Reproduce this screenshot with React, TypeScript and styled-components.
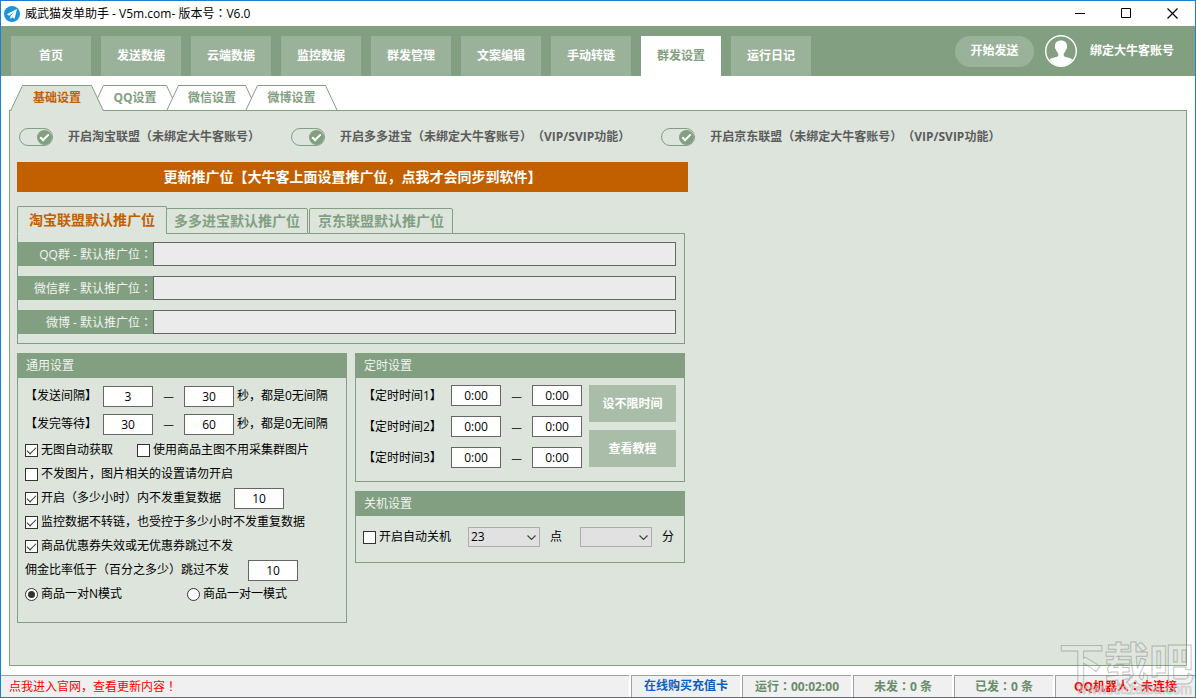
import React from "react";
import styled, { createGlobalStyle } from "styled-components";

const green = "#82a081";
const greenLight = "#9ab29a";
const pale = "#dde4dc";
const orange = "#c26000";

const GlobalStyle = createGlobalStyle`
  *, *::before, *::after { box-sizing: border-box; }
  body { margin: 0; background: #fff; text-spacing-trim: space-all; }
  body, button, input, select {
    font-family: "Open Sans", "Noto Sans CJK SC", sans-serif;
    font-size: 12px;
    line-height: 18px;
    color: #000;
  }
  button { border: 0; padding: 0; background: none; cursor: pointer; white-space: nowrap; }
`;

const Window = styled.div`
  position: relative;
  display: flex;
  flex-direction: column;
  min-height: 100vh;
  border: 1px solid #1a80d4;
  background: #fff;
`;

const TitleBar = styled.header`
  display: flex;
  align-items: center;
  height: 25px;
  padding-left: 3px;
`;

const Title = styled.h1`
  flex: 1;
  margin: 0 0 0 5px;
  font-size: 12px;
  line-height: 18px;
  font-weight: 400;
`;

const WindowButton = styled.button`
  display: flex;
  align-items: center;
  justify-content: center;
  width: 46px;
  height: 25px;
`;

const Header = styled.div`
  display: flex;
  justify-content: space-between;
  align-items: flex-start;
  min-height: 50px;
  padding: 0 21px 0 10px;
  background: ${green};
`;

const MainNav = styled.nav`
  display: flex;
  gap: 10px;
  padding-top: 10px;
`;

const MainTab = styled.button<{ $active?: boolean }>`
  width: 80px;
  height: 40px;
  font-weight: 700;
  background: ${(p) => (p.$active ? "#fff" : greenLight)};
  color: ${(p) => (p.$active ? green : "#fff")};
`;

const Account = styled.div`
  display: flex;
  align-items: center;
  gap: 11px;
  padding-top: 9px;
`;

const StartButton = styled.button`
  width: 79px;
  height: 31px;
  border-radius: 16px;
  font-weight: 700;
  color: #fff;
  background: ${greenLight};
`;

const AccountLink = styled.a`
  margin-left: 2px;
  font-weight: 700;
  color: #fff;
  text-decoration: none;
`;

const SubTabs = styled.nav`
  display: flex;
  position: relative;
  z-index: 1;
  margin: 9px 0 -1px 9px;
`;

const SubTabButton = styled.button<{ $active?: boolean; $level: number }>`
  position: relative;
  z-index: ${(p) => p.$level};
  height: 26px;
  font-weight: 700;
  color: ${(p) => (p.$active ? orange : green)};
  & + & { margin-left: -13px; }
  svg { position: absolute; left: 0; top: 0; }
  span { position: relative; }
`;

const TabText = styled.span<{ $width: number }>`
  display: block;
  width: ${(p) => p.$width}px;
  text-align: center;
`;

const Panel = styled.main`
  flex: 1;
  margin: 0 8px 9px;
  padding: 17px 7px;
  border: 1px solid ${green};
  background: ${pale};
`;

const ToggleRow = styled.div`
  display: flex;
  flex-wrap: wrap;
  gap: 8px 31px;
  margin-bottom: 16px;
  padding-left: 2px;
`;

const ToggleLabel = styled.label`
  display: flex;
  align-items: center;
  gap: 15px;
  font-weight: 700;
  color: #5c5c5c;
`;

const Switch = styled.input`
  appearance: none;
  position: relative;
  width: 34px;
  height: 18px;
  margin: 0;
  border: 1px solid ${green};
  border-radius: 9px;
  &::before {
    content: "";
    position: absolute;
    top: 1px;
    right: 0;
    width: 15px;
    height: 15px;
    border-radius: 50%;
    background: ${green};
  }
  &::after {
    content: "";
    position: absolute;
    top: 5px;
    right: 3px;
    width: 9px;
    height: 5px;
    border: solid #fff;
    border-width: 0 0 2px 2px;
    transform: rotate(-45deg);
  }
`;

const Column = styled.div`
  max-width: 671px;
`;

const UpdateButton = styled.button`
  display: block;
  width: 100%;
  height: 30px;
  margin-bottom: 14px;
  font-size: 14px;
  font-weight: 700;
  color: #fff;
  background: ${orange};
`;

const Settings = styled.div`
  display: flex;
  flex-direction: column;
  margin-right: 3px;
`;

const UnionTabs = styled.div`
  display: flex;
  align-items: flex-end;
  position: relative;
  z-index: 1;
  margin-bottom: -1px;
`;

const UnionTab = styled.button<{ $active?: boolean }>`
  width: ${(p) => (p.$active ? 150 : 142)}px;
  height: ${(p) => (p.$active ? 28 : 26)}px;
  border: 1px solid ${green};
  border-bottom-color: ${(p) => (p.$active ? pale : green)};
  border-radius: 2px 2px 0 0;
  background: ${pale};
  color: ${(p) => (p.$active ? orange : green)};
  font-size: 14px;
  font-weight: 700;
  &:nth-child(2) { margin-left: -1px; }
  &:nth-child(3) { margin-left: 1px; width: 144px; }
`;

const UnionBox = styled.div`
  display: flex;
  flex-direction: column;
  gap: 10px;
  margin-bottom: 9px;
  padding: 8px 8px 9px 0;
  border: 1px solid ${green};
`;

const Slot = styled.div`
  display: flex;
  height: 24px;
  label {
    width: 135px;
    padding-right: 1px;
    line-height: 24px;
    text-align: right;
    white-space: nowrap;
    color: #f0f4f0;
    background: ${green};
  }
  input {
    flex: 1;
    min-width: 0;
    padding: 0 4px;
    border: 1px solid #666;
    background: #ebebeb;
  }
`;

const Groups = styled.div`
  display: grid;
  grid-template-columns: 1fr 1fr;
  gap: 8px;
  align-items: start;
`;

const Stack = styled.div`
  display: grid;
  gap: 9px;
`;

const Group = styled.section`
  border: 1px solid ${green};
`;

const GroupTitle = styled.h2`
  margin: 0;
  height: 24px;
  padding-left: 8px;
  font-size: 12px;
  line-height: 24px;
  font-weight: 400;
  color: #f0f4f0;
  background: ${green};
`;

const GeneralBody = styled.div`
  padding: 4px 7px 16px;
`;

const Row = styled.div<{ $height: number }>`
  display: flex;
  align-items: center;
  height: ${(p) => p.$height}px;
  white-space: nowrap;
`;

const RangeLabel = styled.span<{ $width: number }>`
  width: ${(p) => p.$width}px;
`;

const Dash = styled.span`
  width: 31px;
  font-family: "Noto Sans CJK SC", sans-serif;
  text-align: center;
`;

const NumberBox = styled.input`
  width: 50px;
  height: 21px;
  padding: 0;
  border: 1px solid #666;
  background: #fff;
  text-align: center;
`;

const Unit = styled.span`
  margin-left: 3px;
`;

const Check = styled.label<{ $width?: number }>`
  display: flex;
  align-items: center;
  gap: 3px;
  width: ${(p) => (p.$width ? p.$width + "px" : "auto")};
`;

const Tick = styled.input`
  appearance: none;
  position: relative;
  flex: none;
  width: 13px;
  height: 13px;
  margin: 0;
  border: 1px solid #333;
  background: #fff;
  &[type="radio"] { border-radius: 50%; }
  &[type="checkbox"]:checked::after {
    content: "";
    position: absolute;
    left: 1px;
    top: 2px;
    width: 9px;
    height: 5px;
    border: solid #333;
    border-width: 0 0 1px 1px;
    transform: rotate(-45deg);
  }
  &[type="radio"]:checked::after {
    content: "";
    position: absolute;
    inset: 2px;
    border-radius: 50%;
    background: #333;
  }
`;

const InlineField = styled.label<{ $width: number }>`
  width: ${(p) => p.$width}px;
`;

const TimerBody = styled.div`
  display: flex;
  justify-content: space-between;
  padding: 2px 8px 8px 7px;
`;

const TimerActions = styled.div`
  display: flex;
  flex-direction: column;
  gap: 8px;
  padding-top: 5px;
`;

const ActionButton = styled.button`
  width: 87px;
  height: 37px;
  font-weight: 700;
  color: #fff;
  background: #a9bda9;
`;

const ShutdownBody = styled.div`
  padding: 7px 7px 11px;
`;

const SelectWrap = styled.span`
  display: flex;
  position: relative;
  svg { position: absolute; right: 3px; top: 7px; pointer-events: none; }
`;

const Select = styled.select`
  appearance: none;
  width: 72px;
  height: 20px;
  padding: 0 2px;
  border: 1px solid #adadad;
  border-radius: 0;
  background: #e1e1e1;
`;

const SelectUnit = styled.span<{ $last?: boolean }>`
  width: ${(p) => (p.$last ? "auto" : "40px")};
  padding-left: 10px;
`;

const StatusBar = styled.footer`
  display: flex;
  gap: 2px;
  height: 22px;
`;

const StatusCell = styled.div<{ $width?: number; $color: string }>`
  flex: ${(p) => (p.$width ? `0 0 ${p.$width}px` : "1")};
  border-top: 1px solid #a0a0a0;
  border-left: ${(p) => (p.$width ? "1px solid #a0a0a0" : "0")};
  padding-left: ${(p) => (p.$width ? 0 : 8)}px;
  background: #f0f0f0;
  line-height: 20px;
  text-align: ${(p) => (p.$width ? "center" : "left")};
  font-weight: ${(p) => (p.$width ? 700 : 400)};
  color: ${(p) => p.$color};
  white-space: nowrap;
  a { color: inherit; text-decoration: none; }
`;

const CentredMark = styled.span`
  font-family: "Noto Sans CJK JP", sans-serif;
`;

const Watermark = styled.div`
  position: absolute;
  right: 0;
  bottom: 0;
  width: 136px;
  height: 60px;
  pointer-events: none;
`;

const WatermarkName = styled.div`
  font-size: 45px;
  line-height: 54px;
  font-weight: 700;
  white-space: nowrap;
  color: rgba(255, 255, 255, 0.15);
  -webkit-text-stroke: 1px rgba(110, 120, 110, 0.45);
`;

const WatermarkSite = styled.div`
  position: absolute;
  right: 3px;
  bottom: 0;
  font-family: "Liberation Sans", sans-serif;
  font-size: 14px;
  line-height: 16px;
  color: rgba(255, 255, 255, 0.6);
  -webkit-text-stroke: 1px rgba(120, 120, 120, 0.3);
`;

const AppIcon = () => (
  <svg width="16" height="16" viewBox="0 0 16 16" aria-hidden="true">
    <circle cx="8" cy="8" r="8" fill="#1c95d8" />
    <path d="M13 3 2.8 8.3l2.5 1.5L11 5.200 6.400 10.300v2.900l1.700-2 2.500 1.500z" fill="#fff" />
  </svg>
);

const Avatar = () => (
  <svg width="32" height="32" viewBox="0 0 32 32" aria-hidden="true">
    <circle cx="16" cy="16" r="15.300" fill="none" stroke="#fff" strokeWidth="1.400" />
    <path
      d="M16 5.500c-4 0-6.200 2.300-6 5.800-.5 1 .1 2.700 1 3.200.5 2 1.300 3 2.300 3.900v2.500c-1.200 1.400-6.300 1.500-8.800 3.400C7 28.500 11.500 31 16 31s9-2.500 11.500-6.700c-2.500-1.900-7.600-2-8.800-3.400v-2.500c1-.9 1.800-1.900 2.300-3.900.9-.5 1.500-2.200 1-3.200.2-3.500-2-5.800-6-5.800z"
      fill="#fff"
    />
  </svg>
);

const Chevron = () => (
  <svg width="11" height="7" viewBox="0 0 11 7" aria-hidden="true">
    <path d="M1.500 1.500 5.500 5.500 9.500 1.500" fill="none" stroke="#444" strokeWidth="1.200" />
  </svg>
);

const TabShape = ({ width, active }: { width: number; active?: boolean }) => (
  <svg width={width} height="26" viewBox={`0 0 ${width} 26`} aria-hidden="true">
    <path
      d={`M0.500 26 L12.500 0.500 H${width - 12.5} L${width - 0.5} 26`}
      fill={active ? pale : "#fff"}
      stroke={green}
    />
    {!active && <path d={`M0 25.500 H${width}`} stroke={green} />}
  </svg>
);

/* Sets full-width colons and exclamation marks in the middle of their cell. */
const Text = ({ children }: { children: string }) => (
  <span>
    {children.split(/([：！])/).map((part, i) =>
      i % 2 ? <CentredMark key={i}>{part}</CentredMark> : part
    )}
  </span>
);

const mainTabs = ["首页", "发送数据", "云端数据", "监控数据", "群发管理", "文案编辑", "手动转链", "群发设置", "运行日记"];

const subTabs = [
  { name: "基础设置", width: 94, level: 5, active: true },
  { name: "QQ设置", width: 88, level: 1 },
  { name: "微信设置", width: 92, level: 2 },
  { name: "微博设置", width: 93, level: 3 },
];

const switches = [
  "开启淘宝联盟（未绑定大牛客账号）",
  "开启多多进宝（未绑定大牛客账号）（VIP/SVIP功能）",
  "开启京东联盟（未绑定大牛客账号）（VIP/SVIP功能）",
];

const unions = ["淘宝联盟默认推广位", "多多进宝默认推广位", "京东联盟默认推广位"];
const slots = ["QQ群 - 默认推广位：", "微信群 - 默认推广位：", "微博 - 默认推广位："];

const ranges = [
  { name: "【发送间隔】", from: "3", to: "30" },
  { name: "【发完等待】", from: "30", to: "60" },
];

const SubTab = ({ name, width, level, active }: { name: string; width: number; level: number; active?: boolean }) => (
  <SubTabButton $active={active} $level={level}>
    <TabShape width={width} active={active} />
    <TabText $width={width}>{name}</TabText>
  </SubTabButton>
);

export default function App() {
  return (
    <Window>
      <GlobalStyle />
      <TitleBar>
        <AppIcon />
        <Title><Text>威武猫发单助手 - V5m.com- 版本号：V6.0</Text></Title>
        <WindowButton aria-label="最小化">
          <svg width="11" height="11"><path d="M0 5.500h10" stroke="#000" /></svg>
        </WindowButton>
        <WindowButton aria-label="最大化">
          <svg width="11" height="11"><path d="M.5.5h9v9h-9z" fill="none" stroke="#000" /></svg>
        </WindowButton>
        <WindowButton aria-label="关闭">
          <svg width="11" height="11"><path d="M.5.5l10 10M10.500.5l-10 10" stroke="#000" strokeWidth="1.200" /></svg>
        </WindowButton>
      </TitleBar>

      <Header>
        <MainNav>
          {mainTabs.map((name) => (
            <MainTab key={name} $active={name === "群发设置"}>{name}</MainTab>
          ))}
        </MainNav>
        <Account>
          <StartButton>开始发送</StartButton>
          <Avatar />
          <AccountLink href="#account">绑定大牛客账号</AccountLink>
        </Account>
      </Header>

      <SubTabs>
        {subTabs.map((tab) => (
          <SubTab key={tab.name} {...tab} />
        ))}
      </SubTabs>

      <Panel>
        <ToggleRow>
          {switches.map((name) => (
            <ToggleLabel key={name}>
              <Switch type="checkbox" role="switch" defaultChecked />
              {name}
            </ToggleLabel>
          ))}
        </ToggleRow>

        <Column>
          <UpdateButton>更新推广位【大牛客上面设置推广位，点我才会同步到软件】</UpdateButton>
          <Settings>
            <UnionTabs>
              {unions.map((name, i) => (
                <UnionTab key={name} $active={i === 0}>{name}</UnionTab>
              ))}
            </UnionTabs>
            <UnionBox>
              {slots.map((name, i) => (
                <Slot key={name}>
                  <label htmlFor={`slot${i}`}><Text>{name}</Text></label>
                  <input id={`slot${i}`} type="text" readOnly />
                </Slot>
              ))}
            </UnionBox>

            <Groups>
              <Group>
                <GroupTitle>通用设置</GroupTitle>
                <GeneralBody>
                  {ranges.map((r) => (
                    <Row key={r.name} $height={28}>
                      <RangeLabel $width={78}>{r.name}</RangeLabel>
                      <NumberBox aria-label={r.name} defaultValue={r.from} />
                      <Dash>—</Dash>
                      <NumberBox aria-label={r.name} defaultValue={r.to} />
                      <Unit>秒，都是0无间隔</Unit>
                    </Row>
                  ))}
                  <Row $height={24}>
                    <Check $width={112}><Tick type="checkbox" defaultChecked />无图自动获取</Check>
                    <Check><Tick type="checkbox" />使用商品主图不用采集群图片</Check>
                  </Row>
                  <Row $height={24}>
                    <Check><Tick type="checkbox" />不发图片，图片相关的设置请勿开启</Check>
                  </Row>
                  <Row $height={24}>
                    <Check $width={209}><Tick type="checkbox" defaultChecked />开启（多少小时）内不发重复数据</Check>
                    <NumberBox aria-label="小时" defaultValue="10" />
                  </Row>
                  <Row $height={24}>
                    <Check><Tick type="checkbox" defaultChecked />监控数据不转链，也受控于多少小时不发重复数据</Check>
                  </Row>
                  <Row $height={24}>
                    <Check><Tick type="checkbox" defaultChecked />商品优惠券失效或无优惠券跳过不发</Check>
                  </Row>
                  <Row $height={24}>
                    <InlineField $width={223} htmlFor="commission">佣金比率低于（百分之多少）跳过不发</InlineField>
                    <NumberBox id="commission" defaultValue="10" />
                  </Row>
                  <Row $height={24}>
                    <Check $width={162}><Tick type="radio" name="mode" defaultChecked />商品一对N模式</Check>
                    <Check><Tick type="radio" name="mode" />商品一对一模式</Check>
                  </Row>
                </GeneralBody>
              </Group>

              <Stack>
                <Group>
                  <GroupTitle>定时设置</GroupTitle>
                  <TimerBody>
                    <div>
                      {["【定时时间1】", "【定时时间2】", "【定时时间3】"].map((name) => (
                        <Row key={name} $height={31}>
                          <RangeLabel $width={88}>{name}</RangeLabel>
                          <NumberBox aria-label={name} defaultValue="0:00" />
                          <Dash>—</Dash>
                          <NumberBox aria-label={name} defaultValue="0:00" />
                        </Row>
                      ))}
                    </div>
                    <TimerActions>
                      <ActionButton>设不限时间</ActionButton>
                      <ActionButton>查看教程</ActionButton>
                    </TimerActions>
                  </TimerBody>
                </Group>

                <Group>
                  <GroupTitle>关机设置</GroupTitle>
                  <ShutdownBody>
                    <Row $height={28}>
                      <Check $width={105}><Tick type="checkbox" />开启自动关机</Check>
                      <SelectWrap>
                        <Select aria-label="点" defaultValue="23"><option>23</option></Select>
                        <Chevron />
                      </SelectWrap>
                      <SelectUnit>点</SelectUnit>
                      <SelectWrap>
                        <Select aria-label="分" defaultValue=""><option value=""></option></Select>
                        <Chevron />
                      </SelectWrap>
                      <SelectUnit $last>分</SelectUnit>
                    </Row>
                  </ShutdownBody>
                </Group>
              </Stack>
            </Groups>
          </Settings>
        </Column>
      </Panel>

      <StatusBar>
        <StatusCell $color="#f00"><a href="#site"><Text>点我进入官网，查看更新内容！</Text></a></StatusCell>
        <StatusCell $width={109} $color="#0a5fc4"><a href="#buy">在线购买充值卡</a></StatusCell>
        <StatusCell $width={109} $color="#6a8c6a"><Text>运行：00:02:00</Text></StatusCell>
        <StatusCell $width={99} $color="#6a8c6a"><Text>未发：0 条</Text></StatusCell>
        <StatusCell $width={99} $color="#6a8c6a"><Text>已发：0 条</Text></StatusCell>
        <StatusCell $width={140} $color="#f00"><Text>QQ机器人：未连接</Text></StatusCell>
      </StatusBar>

      <Watermark aria-hidden="true">
        <WatermarkName>下载吧</WatermarkName>
        <WatermarkSite>www.xiazaiba.com</WatermarkSite>
      </Watermark>
    </Window>
  );
}
